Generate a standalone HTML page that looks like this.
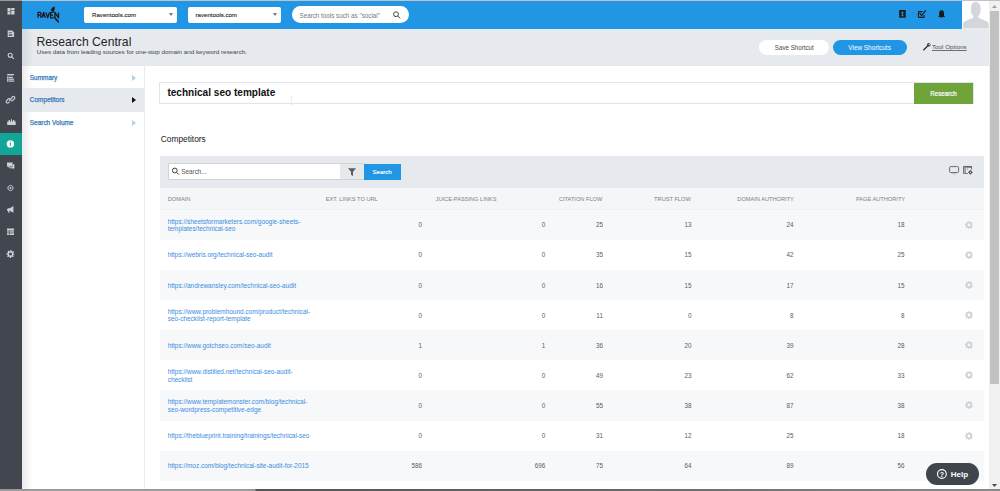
<!DOCTYPE html>
<html><head><meta charset="utf-8">
<style>
*{margin:0;padding:0;box-sizing:border-box}
html,body{width:1000px;height:491px;overflow:hidden;background:#fff;font-family:"Liberation Sans",sans-serif}
.a{position:absolute}
#side{left:0;top:0;width:22px;height:491px;background:#41464f}
#side .ic{position:absolute;left:0;width:22px;height:22px}
#topline{left:0;top:0;width:1000px;height:1px;background:rgba(176,178,182,0.78)}
#hdr{left:22px;top:1px;width:940px;height:27.5px;background:#2196e5}
#avatar{left:962px;top:0;width:27px;height:28px;background:#fff}
#sb{left:989px;top:0;width:11px;height:491px;background:#f1f1f1}
#thumb{left:990px;top:11.3px;width:9px;height:372.7px;background:#c1c1c1}
#pghdr{left:22px;top:28.5px;width:967px;height:37.4px;background:#e6eaee}
#nav{left:22px;top:66px;width:122px;height:425px;background:#fff}
#sep{left:143.5px;top:66px;width:1.5px;height:425px;background:#e9edf0}
.navi{position:absolute;left:22px;width:121.5px;height:22px;font-size:6.45px;color:#3a79b9;-webkit-text-stroke:0.25px #3a79b9}
.navi span{position:absolute;left:7.8px;top:7.7px}
.navi i{position:absolute;left:109.6px;top:8.6px;width:0;height:0;border-top:3px solid transparent;border-bottom:3px solid transparent;border-left:4px solid #a9d3f1}
.dd{position:absolute;top:7px;height:16.3px;background:#fff;border-radius:2px;font-size:6.15px;color:#2a2a2a;-webkit-text-stroke:0.12px #2a2a2a}
.dd span{position:absolute;left:8px;top:4.2px}
.dd i{position:absolute;top:6px;width:0;height:0;border-left:2.3px solid transparent;border-right:2.3px solid transparent;border-top:3.4px solid #777}
.pill{position:absolute;top:39.8px;height:15px;border-radius:8px;font-size:6.25px;text-align:center;line-height:15.4px}
table{border-collapse:collapse}
.row{position:absolute;left:160px;width:823.5px;height:30.2px}
.dl{left:167.7px;font-size:6.45px;color:#3a8de0;line-height:7.4px;white-space:nowrap}
.nm{font-size:6.3px;color:#575c63;text-align:right;width:40px;line-height:8px}
.th{position:absolute;top:196.1px;font-size:5.7px;color:#7c8188;letter-spacing:-0.02px}
.gear{position:absolute;left:964.6px;width:8px;height:8px}
</style></head><body>
<div id="side" class="a"></div>
<div id="hdr" class="a"></div>
<div id="avatar" class="a"></div>
<div id="pghdr" class="a"></div>
<div id="nav" class="a"></div>
<div id="sep" class="a"></div>
<div class="a" style="left:22px;top:28.5px;width:11px;height:463px;background:linear-gradient(to right,rgba(0,0,0,0.08),rgba(0,0,0,0))"></div>
<div id="sb" class="a"></div>
<div id="thumb" class="a"></div>
<div id="topline" class="a"></div>

<!-- header contents -->
<div class="dd" style="left:84px;width:93.4px"><span>Raventools.com</span><i style="left:85.3px"></i></div>
<div class="dd" style="left:187.5px;width:93.5px"><span style="left:8px">raventools.com</span><i style="left:85.5px"></i></div>
<div class="a" style="left:291.5px;top:6px;width:117.5px;height:17.3px;border-radius:9px;background:#fff"><span class="a" style="left:8px;top:5.6px;font-size:6.28px;color:#777">Search tools such as "social"</span></div>

<!-- page header -->
<div class="a" style="left:36.5px;top:34.5px;font-size:12.2px;color:#222">Research Central</div>
<div class="a" style="left:36.8px;top:48.2px;font-size:6.25px;color:#444">Uses data from leading sources for one-stop domain and keyword research.</div>
<div class="pill" style="left:759px;width:70px;background:#fff;color:#4a4a4a"><span style="display:inline-block;font-size:7.1px;transform:scaleX(0.875)">Save Shortcut</span></div>
<div class="pill" style="left:833px;width:73.7px;background:#2196e5;color:#fff"><span style="display:inline-block;font-size:7.1px;transform:scaleX(0.9)">View Shortcuts</span></div>
<div class="a" style="left:932px;top:43.4px;font-size:6.26px;color:#4d5056;text-decoration:underline;text-decoration-color:#6a6d72">Tool Options</div>

<!-- nav -->
<div class="navi" style="top:66px"><span>Summary</span><i></i></div>
<div class="navi" style="top:88px;height:23.8px;background:#e6eaee"><span style="top:8.3px">Competitors</span><i style="border-left-color:#111;top:8.7px"></i></div>
<div class="navi" style="top:111.8px"><span style="top:7.4px">Search Volume</span><i style="top:7.8px"></i></div>

<!-- research box -->
<div class="a" style="left:159px;top:82px;width:815px;height:22px;border:1px solid #dfe5ea;background:#fff"></div>
<div class="a" style="left:167.4px;top:86.5px;font-size:10.07px;font-weight:bold;color:#111">technical seo template</div>
<div class="a" style="left:913.7px;top:83px;width:59.5px;height:20.5px;background:#6ea43a;color:#fff;text-align:center;line-height:21.4px"><span style="display:inline-block;vertical-align:top;font-size:6.8px;-webkit-text-stroke:0.2px #fff;transform:scaleX(0.91)">Research</span></div>

<svg class="a" style="left:289px;top:95.5px" width="5" height="9" viewBox="0 0 5 9"><path fill="none" stroke="#dde2e6" stroke-width="0.5" d="M2.5 0.6v7.8M1.2 0.5h2.6M1.2 8.5h2.6"/></svg>
<div class="a" style="left:160.8px;top:134px;font-size:8.35px;color:#222">Competitors</div>

<!-- table toolbar -->
<div class="a" style="left:160px;top:156px;width:823.5px;height:32px;background:#e6eaee"></div>
<div class="a" style="left:168px;top:163.2px;width:196px;height:17.3px;background:#fff;border:1px solid #cfd4d8"></div>
<div class="a" style="left:340.3px;top:164.2px;width:23.5px;height:15.3px;background:#e6e9ec"></div>
<div class="a" style="left:363.6px;top:163.6px;width:37px;height:16.2px;background:#2196e5;color:#fff;font-size:6.1px;-webkit-text-stroke:0.15px #fff;text-align:center;line-height:16px">Search</div>
<div class="a" style="left:181.3px;top:168.2px;font-size:6.35px;color:#555">Search...</div>

<!-- header row -->
<div class="a" style="left:160px;top:188px;width:823.5px;height:21.7px;background:#f5f6f8;border-bottom:1px solid #eff1f3"></div>
<div class="th" style="left:167.7px">DOMAIN</div>
<div class="th" style="left:325.8px">EXT. LINKS TO URL</div>
<div class="th" style="left:435.6px">JUICE-PASSING LINKS</div>
<div class="th" style="left:558.9px">CITATION FLOW</div>
<div class="th" style="left:654.1px">TRUST FLOW</div>
<div class="th" style="left:737.3px">DOMAIN AUTHORITY</div>
<div class="th" style="left:855.9px">PAGE AUTHORITY</div>

<!--ROWS-->
<div class="row" style="top:209.70px;background:#f7f8fa"></div>
<div class="a dl" style="top:217.66px">https://sheetsformarketers.com/google-sheets-<br>templates/technical-seo</div>
<div class="a nm" style="left:382.00px;top:221.26px">0</div>
<div class="a nm" style="left:505.20px;top:221.26px">0</div>
<div class="a nm" style="left:562.90px;top:221.26px">25</div>
<div class="a nm" style="left:651.50px;top:221.26px">13</div>
<div class="a nm" style="left:753.40px;top:221.26px">24</div>
<div class="a nm" style="left:864.50px;top:221.26px">18</div>
<svg class="a gear" style="top:220.76px" viewBox="0 0 16 16"><use href="#gearI"/></svg>
<div class="row" style="top:239.82px;background:#fff"></div>
<div class="a dl" style="top:251.48px">https://webris.org/technical-seo-audit</div>
<div class="a nm" style="left:382.00px;top:251.38px">0</div>
<div class="a nm" style="left:505.20px;top:251.38px">0</div>
<div class="a nm" style="left:562.90px;top:251.38px">35</div>
<div class="a nm" style="left:651.50px;top:251.38px">15</div>
<div class="a nm" style="left:753.40px;top:251.38px">42</div>
<div class="a nm" style="left:864.50px;top:251.38px">25</div>
<svg class="a gear" style="top:250.88px" viewBox="0 0 16 16"><use href="#gearI"/></svg>
<div class="row" style="top:269.94px;background:#f7f8fa"></div>
<div class="a dl" style="top:281.60px">https://andrewansley.com/technical-seo-audit</div>
<div class="a nm" style="left:382.00px;top:281.50px">0</div>
<div class="a nm" style="left:505.20px;top:281.50px">0</div>
<div class="a nm" style="left:562.90px;top:281.50px">16</div>
<div class="a nm" style="left:651.50px;top:281.50px">15</div>
<div class="a nm" style="left:753.40px;top:281.50px">17</div>
<div class="a nm" style="left:864.50px;top:281.50px">15</div>
<svg class="a gear" style="top:281.00px" viewBox="0 0 16 16"><use href="#gearI"/></svg>
<div class="row" style="top:300.06px;background:#fff"></div>
<div class="a dl" style="top:308.02px">https://www.problemhound.com/product/technical-<br>seo-checklist-report-template</div>
<div class="a nm" style="left:382.00px;top:311.62px">0</div>
<div class="a nm" style="left:505.20px;top:311.62px">0</div>
<div class="a nm" style="left:562.90px;top:311.62px">11</div>
<div class="a nm" style="left:651.50px;top:311.62px">0</div>
<div class="a nm" style="left:753.40px;top:311.62px">8</div>
<div class="a nm" style="left:864.50px;top:311.62px">8</div>
<svg class="a gear" style="top:311.12px" viewBox="0 0 16 16"><use href="#gearI"/></svg>
<div class="row" style="top:330.18px;background:#f7f8fa"></div>
<div class="a dl" style="top:341.84px">https://www.gotchseo.com/seo-audit</div>
<div class="a nm" style="left:382.00px;top:341.74px">1</div>
<div class="a nm" style="left:505.20px;top:341.74px">1</div>
<div class="a nm" style="left:562.90px;top:341.74px">36</div>
<div class="a nm" style="left:651.50px;top:341.74px">20</div>
<div class="a nm" style="left:753.40px;top:341.74px">39</div>
<div class="a nm" style="left:864.50px;top:341.74px">28</div>
<svg class="a gear" style="top:341.24px" viewBox="0 0 16 16"><use href="#gearI"/></svg>
<div class="row" style="top:360.30px;background:#fff"></div>
<div class="a dl" style="top:368.26px">https://www.distilled.net/technical-seo-audit-<br>checklist</div>
<div class="a nm" style="left:382.00px;top:371.86px">0</div>
<div class="a nm" style="left:505.20px;top:371.86px">0</div>
<div class="a nm" style="left:562.90px;top:371.86px">49</div>
<div class="a nm" style="left:651.50px;top:371.86px">23</div>
<div class="a nm" style="left:753.40px;top:371.86px">62</div>
<div class="a nm" style="left:864.50px;top:371.86px">33</div>
<svg class="a gear" style="top:371.36px" viewBox="0 0 16 16"><use href="#gearI"/></svg>
<div class="row" style="top:390.42px;background:#f7f8fa"></div>
<div class="a dl" style="top:398.38px">https://www.templatemonster.com/blog/technical-<br>seo-wordpress-competitive-edge</div>
<div class="a nm" style="left:382.00px;top:401.98px">0</div>
<div class="a nm" style="left:505.20px;top:401.98px">0</div>
<div class="a nm" style="left:562.90px;top:401.98px">55</div>
<div class="a nm" style="left:651.50px;top:401.98px">38</div>
<div class="a nm" style="left:753.40px;top:401.98px">87</div>
<div class="a nm" style="left:864.50px;top:401.98px">38</div>
<svg class="a gear" style="top:401.48px" viewBox="0 0 16 16"><use href="#gearI"/></svg>
<div class="row" style="top:420.54px;background:#fff"></div>
<div class="a dl" style="top:432.20px">https://theblueprint.training/trainings/technical-seo</div>
<div class="a nm" style="left:382.00px;top:432.10px">0</div>
<div class="a nm" style="left:505.20px;top:432.10px">0</div>
<div class="a nm" style="left:562.90px;top:432.10px">31</div>
<div class="a nm" style="left:651.50px;top:432.10px">12</div>
<div class="a nm" style="left:753.40px;top:432.10px">25</div>
<div class="a nm" style="left:864.50px;top:432.10px">18</div>
<svg class="a gear" style="top:431.60px" viewBox="0 0 16 16"><use href="#gearI"/></svg>
<div class="row" style="top:450.66px;background:#f7f8fa"></div>
<div class="a dl" style="top:462.32px">https://moz.com/blog/technical-site-audit-for-2015</div>
<div class="a nm" style="left:382.00px;top:462.22px">586</div>
<div class="a nm" style="left:505.20px;top:462.22px">696</div>
<div class="a nm" style="left:562.90px;top:462.22px">75</div>
<div class="a nm" style="left:651.50px;top:462.22px">64</div>
<div class="a nm" style="left:753.40px;top:462.22px">89</div>
<div class="a nm" style="left:864.50px;top:462.22px">56</div>
<svg class="a gear" style="top:461.72px" viewBox="0 0 16 16"><use href="#gearI"/></svg>
<div class="row" style="top:480.78px;background:#fff"></div>
<div class="a dl" style="top:492.44px">https://www.example.com/technical-seo</div>
<div class="a nm" style="left:382.00px;top:492.34px">0</div>
<div class="a nm" style="left:505.20px;top:492.34px">0</div>
<div class="a nm" style="left:562.90px;top:492.34px">0</div>
<div class="a nm" style="left:651.50px;top:492.34px">0</div>
<div class="a nm" style="left:753.40px;top:492.34px">0</div>
<div class="a nm" style="left:864.50px;top:492.34px">0</div>
<svg class="a gear" style="top:491.84px" viewBox="0 0 16 16"><use href="#gearI"/></svg>
<!--/ROWS-->

<!-- help -->

<div class="a" style="left:0;top:489px;width:1000px;height:2px;background:linear-gradient(to right,#9a9a9a 0,#9a9a9a 25.5%,#555 25.6%,#666 60%,#8a8a8a 100%)"></div>
<svg width="0" height="0" style="position:absolute"><defs><g id="gearI"><circle cx="8" cy="8" r="4.6" fill="none" stroke="#cfd3d8" stroke-width="3.6"/><circle cx="8" cy="8" r="6.8" fill="none" stroke="#cfd3d8" stroke-width="2.6" stroke-dasharray="2.6 2.74" stroke-dashoffset="1.3"/></g></defs></svg>
<svg class="a" style="left:0;top:0;pointer-events:none" width="1000" height="491" viewBox="0 0 1000 491">
 <!-- sidebar icons -->
 <g fill="#cdd1d6">
  <rect x="7.5" y="8" width="3" height="3.6"/><rect x="7.5" y="12.1" width="3" height="2.4"/>
  <rect x="11.2" y="8" width="3.3" height="2.3"/><rect x="11.2" y="10.8" width="3.3" height="3.7"/>
  <path d="M7.7 30.6h4.4l2 2v4.3H7.7z"/>
  <path fill="none" stroke="#cdd1d6" stroke-width="1.1" d="M10.2 55.2m-2 0a2 2 0 1 0 4 0a2 2 0 1 0 -4 0M11.7 56.8l2.2 2.1"/>
  <rect x="7.2" y="74" width="6.6" height="1.4"/><rect x="7.2" y="76.2" width="1.2" height="5.6"/><rect x="8.8" y="76.8" width="4" height="1.2"/><rect x="8.8" y="78.6" width="5.2" height="1.2"/><rect x="8.8" y="80.5" width="5.4" height="1.2"/>
  <path fill="none" stroke="#cdd1d6" stroke-width="1.2" d="M9.6 101.6l-1 1a1.4 1.4 0 0 1 -2 -2l1.6 -1.6a1.4 1.4 0 0 1 2 0M11.4 97.8l1 -1a1.4 1.4 0 0 1 2 2l-1.6 1.6a1.4 1.4 0 0 1 -2 0M9.2 100.6l3 -3"/>
  <path d="M7.2 125v-3.6h1.4v-1.3h1.4v1.3h1v-2.2h1v2.2h1v-1.3h1.4v1.3h1.3v3.6z"/>
  <path d="M7 162.6h5.6v4h-3.4l-1.3 1.2v-1.2H7z"/><path d="M13.2 164.2h1.2v4h-0.9v1.2l-1.2-1.2h-3.2v-1h3.1z"/>
  <path fill="none" stroke="#cdd1d6" stroke-width="1" d="M10.5 185.4a2.6 2.6 0 1 0 0.01 0z"/><circle cx="10.5" cy="188" r="1"/>
  <path d="M7 209.2l1.2-1h1.6l3.6-2.2v6.8l-3.6-2h-0.6l0.6 2h-1.2l-0.8-2h-0.8z"/>
  <rect x="7" y="228.5" width="7" height="6.5"/>
  <circle cx="10.5" cy="254" r="2.3" fill="none" stroke="#cdd1d6" stroke-width="1.5"/><circle cx="10.5" cy="254" r="3.3" fill="none" stroke="#cdd1d6" stroke-width="1.3" stroke-dasharray="1.3 1.29" stroke-dashoffset="0.65"/>
 </g>
 <g fill="#41464f">
  <rect x="8.7" y="32.4" width="3.2" height="0.7"/><rect x="8.7" y="33.9" width="3.6" height="0.7"/><rect x="8.7" y="35.3" width="3.6" height="0.7"/>
  <rect x="7" y="230.6" width="7" height="0.7"/><rect x="7" y="232.6" width="7" height="0.7"/><rect x="9.3" y="230.6" width="0.6" height="4.4"/>
  
 </g>
 <!-- info active -->
 <rect x="0" y="133" width="22" height="22" fill="#13a597"/>
 <circle cx="10.4" cy="143.9" r="3.7" fill="#fff"/>
 <rect x="9.9" y="143" width="1" height="2.8" fill="#13a597"/><rect x="9.9" y="141.4" width="1" height="1" fill="#13a597"/>
 <!-- logo -->
 <g fill="none" stroke="#1d1717" stroke-width="1.25" stroke-linejoin="round">
  <path d="M38 17.8V12.4h2q1.1 0 1.1 1.3t-1.1 1.3h-2M40.2 15l1 2.8"/>
  <path d="M41.9 17.8l1.7-5.4 1.7 5.4M42.6 15.9h2"/>
  <path d="M45.9 12.4l1.8 5.4 1.8-5.4"/>
  <path d="M53.4 12.4h-2.8v5.4h2.8M50.6 15h2.4"/>
  <path d="M54.9 17.8V12.4l3.6 5.4V12.4"/>
 </g>
 <path fill="#1d1717" d="M50.8 10.6l0.8-2.2 1.4-1.4 2.6-0.2-1.3 0.9 0.7 1.2-0.9 1.1 0.3 1.7-1.3 0.4-0.9-1.2z"/>
 <path fill="#1d1717" d="M53.2 16.6l1.6 0.2 3.6 3.8 0.8 1.9-0.9 0.3-2.4-2.2z"/>
 <!-- header icons -->
 <rect x="899.2" y="10" width="6.5" height="7.7" fill="#1d1717"/>
 <circle cx="902.4" cy="12.7" r="1.1" fill="#2196e5"/><rect x="901.9" y="13" width="1" height="2.6" fill="#2196e5"/><rect x="900.8" y="15.4" width="3.2" height="0.8" fill="#2196e5"/>
 <path fill="none" stroke="#1d1717" stroke-width="1.1" d="M922.6 11.6h-3.4a.8.8 0 0 0 -.8 .8v4.2a.8.8 0 0 0 .8 .8h4.2a.8.8 0 0 0 .8 -.8v-1.6M919.6 13.2l2 2.5 4.2-5.4"/>
 <path fill="#1d1717" d="M941.6 10.2c1.6 0 2.4 1.3 2.4 3v2.4l1 1.3h-6.8l1-1.3v-2.4c0-1.7.8-3 2.4-3zM940.7 17.2h1.8a.9.9 0 0 1 -1.8 0z"/>
 <!-- avatar -->
 <path fill="#d3d7dc" d="M975.3 2.1c3.1 0 5.3 1.9 5.3 5.6v3.4c0 2.2-1 3.6-2.2 4.6v2l7.6 3.4c1.6.7 2.7 1.6 2.7 3v4.4H963v-4.4c0-1.4 1.1-2.3 2.7-3l7.5-3.4v-2c-1.2-1-2.2-2.4-2.2-4.6V7.7c0-3.7 2.2-5.6 4.3-5.6z"/>
 <!-- scrollbar arrows -->
 <path fill="#a3a3a3" d="M991.9 7.9l2.6-2.9 2.6 2.9z"/>
 <path fill="#505050" d="M991.9 484.1l2.6 2.9 2.6-2.9z"/>
 <!-- header search magnifier -->
 <path fill="none" stroke="#333" stroke-width="0.9" d="M396 14.2m-2.4 0a2.4 2.4 0 1 0 4.8 0a2.4 2.4 0 1 0 -4.8 0M397.8 16l2.4 2.2"/>
 <!-- table search magnifier -->
 <path fill="none" stroke="#333" stroke-width="0.95" d="M174.8 170.5m-2.4 0a2.4 2.4 0 1 0 4.8 0a2.4 2.4 0 1 0 -4.8 0M176.6 172.3l2.3 2.3"/>
 <!-- funnel -->
 <path fill="#5a5e64" d="M348 168.2h8l-3 3.5v4.2l-2-1.2v-3z"/>
 <!-- wrench -->
 <path fill="#333" d="M929.9 43.2l-1.5 1.5.8.8 1.5-1.5c.2 1-.1 1.8-1 2.3-.5.3-1.1.3-1.6.1l-4.3 4.3-.9-.9 4.3-4.3c-.2-.6-.2-1.2.1-1.7.6-.9 1.5-1.1 2.6-.6z"/>
 <!-- toolbar icons -->
 <rect x="949.6" y="166.6" width="9" height="5.9" rx="1" fill="none" stroke="#55595f" stroke-width="0.85"/>
 <rect x="953.7" y="172.5" width="0.9" height="0.9" fill="#55595f"/><path d="M951.3 174h5.6" stroke="#9a9ea3" stroke-width="0.4"/>
 <path fill="none" stroke="#55595f" stroke-width="0.8" d="M971.6 169.5v-3h-8.1v7h4.4"/>
 <rect x="963.5" y="166.3" width="8.3" height="1.3" fill="#55595f"/>
 <rect x="964.2" y="167.6" width="1.8" height="5.5" fill="#9ca0a6"/><rect x="967.3" y="167.6" width="0.8" height="2.5" fill="#9ca0a6"/>
 <path fill="#44484e" d="M970.4 169.9l2.4 2.4-2.4 2.4-2.4-2.4z"/><path fill="#e6eaee" d="M970.4 171.4l0.9 0.9-0.9 0.9-0.9-0.9z"/>
</svg>
<div class="a" style="left:926px;top:463px;width:53px;height:22px;border-radius:11px;background:#40444d"></div>
<svg class="a" style="left:926px;top:463px" width="53" height="22" viewBox="0 0 53 22"><circle cx="15.9" cy="11" r="4.4" fill="none" stroke="#fff" stroke-width="1.1"/><text x="15.9" y="13.6" text-anchor="middle" font-family="Liberation Sans" font-weight="bold" font-size="7" fill="#fff">?</text><text x="24.7" y="14" font-family="Liberation Sans" font-weight="bold" font-size="8" fill="#fff">Help</text></svg>
</body></html>
